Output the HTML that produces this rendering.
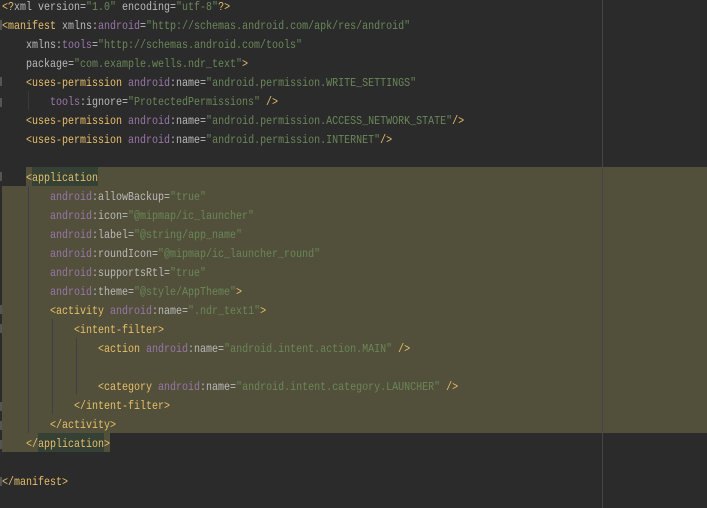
<!DOCTYPE html>
<html>
<head>
<meta charset="utf-8">
<style>
html,body{margin:0;padding:0;background:#2b2b2b;}
#e{position:relative;width:707px;height:508px;overflow:hidden;background:#2b2b2b;}
.b{position:absolute;}
pre{position:absolute;left:2px;margin:0;height:19px;line-height:19px;font-family:"Liberation Mono",monospace;font-size:12px;transform:scaleX(0.83333);transform-origin:0 0;color:#bababa;white-space:pre;}
i{font-style:normal;color:#e8bf6a;}
u{text-decoration:none;color:#9876aa;}
s{text-decoration:none;color:#6a8759;}
</style>
</head>
<body>
<div id="e">
<div class="b" style="left:26px;top:167px;width:681px;height:19px;background:#52503a"></div>
<div class="b" style="left:2px;top:186px;width:705px;height:247px;background:#52503a"></div>
<div class="b" style="left:2px;top:433px;width:108px;height:19px;background:#52503a"></div>
<div class="b" style="left:32px;top:167px;width:66px;height:19px;background:#344134"></div>
<div class="b" style="left:38px;top:433px;width:66px;height:19px;background:#344134"></div>
<div class="b" style="left:602px;top:0;width:1px;height:508px;background:#464646"></div>
<div class="b" style="left:28px;top:91px;width:1px;height:19px;background:#3a3a3a"></div>
<div class="b" style="left:28px;top:186px;width:1px;height:247px;background:#3f3f46"></div>
<div class="b" style="left:52px;top:319px;width:1px;height:95px;background:#3f3f46"></div>
<div class="b" style="left:76px;top:338px;width:1px;height:57px;background:#3f3f46"></div>
<div class="b" style="left:0;top:20px;width:2px;height:10px;background:#555"></div>
<div class="b" style="left:0;top:77px;width:2px;height:9px;background:#555"></div>
<div class="b" style="left:0;top:98px;width:2px;height:9px;background:#555"></div>
<div class="b" style="left:0;top:172px;width:2px;height:9px;background:#555"></div>
<div class="b" style="left:0;top:305px;width:2px;height:9px;background:#555"></div>
<div class="b" style="left:0;top:324px;width:2px;height:9px;background:#555"></div>
<div class="b" style="left:0;top:402px;width:2px;height:9px;background:#555"></div>
<div class="b" style="left:0;top:421px;width:2px;height:9px;background:#555"></div>
<div class="b" style="left:0;top:440px;width:2px;height:9px;background:#555"></div>
<div class="b" style="left:0;top:477px;width:2px;height:9px;background:#555"></div>

<pre style="top:-2px"><i>&lt;?</i>xml version=<s>"1.0"</s> encoding=<s>"utf-8"</s><i>?&gt;</i></pre>
<pre style="top:17px"><i>&lt;manifest</i> xmlns:<u>android</u>=<s>"http://schemas.android.com/apk/res/android"</s></pre>
<pre style="top:36px">    xmlns:<u>tools</u>=<s>"http://schemas.android.com/tools"</s></pre>
<pre style="top:55px">    package=<s>"com.example.wells.ndr_text"</s><i>&gt;</i></pre>
<pre style="top:74px">    <i>&lt;uses-permission</i> <u>android</u>:name=<s>"android.permission.WRITE_SETTINGS"</s></pre>
<pre style="top:93px">        <u>tools</u>:ignore=<s>"ProtectedPermissions"</s> <i>/&gt;</i></pre>
<pre style="top:112px">    <i>&lt;uses-permission</i> <u>android</u>:name=<s>"android.permission.ACCESS_NETWORK_STATE"</s><i>/&gt;</i></pre>
<pre style="top:131px">    <i>&lt;uses-permission</i> <u>android</u>:name=<s>"android.permission.INTERNET"</s><i>/&gt;</i></pre>
<pre style="top:169px">    <i>&lt;application</i></pre>
<pre style="top:188px">        <u>android</u>:allowBackup=<s>"true"</s></pre>
<pre style="top:207px">        <u>android</u>:icon=<s>"@mipmap/ic_launcher"</s></pre>
<pre style="top:226px">        <u>android</u>:label=<s>"@string/app_name"</s></pre>
<pre style="top:245px">        <u>android</u>:roundIcon=<s>"@mipmap/ic_launcher_round"</s></pre>
<pre style="top:264px">        <u>android</u>:supportsRtl=<s>"true"</s></pre>
<pre style="top:283px">        <u>android</u>:theme=<s>"@style/AppTheme"</s><i>&gt;</i></pre>
<pre style="top:302px">        <i>&lt;activity</i> <u>android</u>:name=<s>".ndr_text1"</s><i>&gt;</i></pre>
<pre style="top:321px">            <i>&lt;intent-filter&gt;</i></pre>
<pre style="top:340px">                <i>&lt;action</i> <u>android</u>:name=<s>"android.intent.action.MAIN"</s> <i>/&gt;</i></pre>
<pre style="top:378px">                <i>&lt;category</i> <u>android</u>:name=<s>"android.intent.category.LAUNCHER"</s> <i>/&gt;</i></pre>
<pre style="top:397px">            <i>&lt;/intent-filter&gt;</i></pre>
<pre style="top:416px">        <i>&lt;/activity&gt;</i></pre>
<pre style="top:435px">    <i>&lt;/application&gt;</i></pre>
<pre style="top:473px"><i>&lt;/manifest&gt;</i></pre>
</div>
</body>
</html>
